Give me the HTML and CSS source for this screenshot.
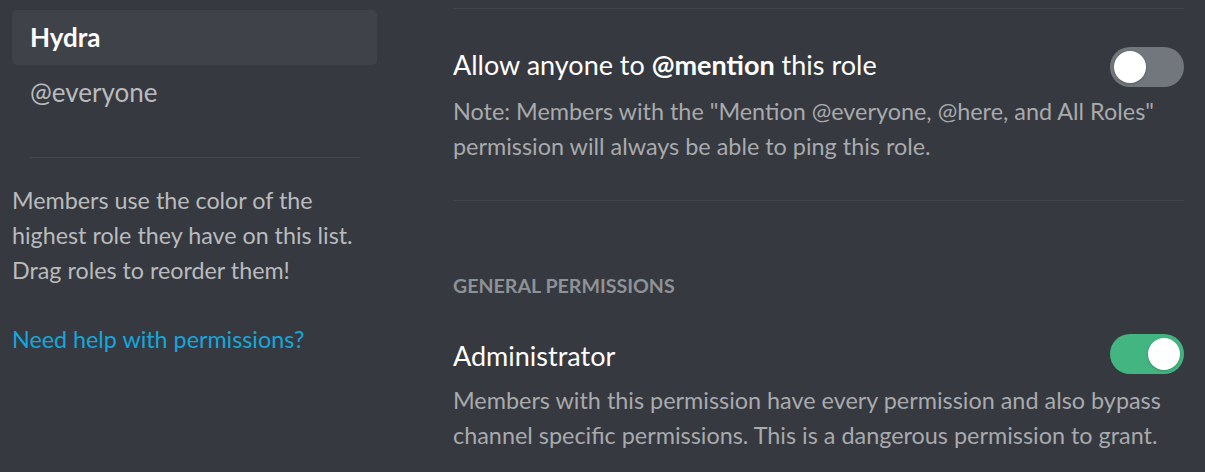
FILE: index.html
```html
<!DOCTYPE html>
<html lang="en">
<head>
<meta charset="utf-8">
<title>Roles</title>
<link rel="stylesheet" href="styles.css">
</head>
<body>
<div class="layout">
  <aside class="sidebar">
    <div class="roles">
      <div class="role role-selected">Hydra</div>
      <div class="role">@everyone</div>
    </div>
    <div class="sep"></div>
    <p class="hint">Members use the color of the highest role they have on this list. Drag roles to reorder them!</p>
    <a class="help" href="#">Need help with permissions?</a>
  </aside>
  <main class="content">
    <div class="divider"></div>
    <section class="setting setting-mention">
      <div class="setting-row">
        <h3 class="setting-title">Allow anyone to <strong>@mention</strong> this role</h3>
        <div class="toggle toggle-off"><span class="knob"></span></div>
      </div>
      <p class="desc">Note: Members with the "Mention @everyone, @here, and All Roles" permission will always be able to ping this role.</p>
    </section>
    <div class="divider divider-2"></div>
    <h4 class="section-title">General Permissions</h4>
    <section class="setting setting-admin">
      <div class="setting-row">
        <h3 class="setting-title">Administrator</h3>
        <div class="toggle toggle-on"><span class="knob"></span></div>
      </div>
      <p class="desc">Members with this permission have every permission and also bypass channel specific permissions. This is a dangerous permission to grant.</p>
    </section>
  </main>
</div>
</body>
</html>
```

FILE: styles.css
```css
html, body {
  margin: 0;
  padding: 0;
  background: #36393f;
  height: 100%;
  overflow: hidden;
}
body {
  font-family: Lato, "Open Sans", "Noto Sans", sans-serif;
  color: #dcddde;
}
.layout {
  display: flex;
  align-items: flex-start;
}
.sidebar {
  width: 365px;
  padding: 10px 0 0 12px;
  flex: none;
}
.roles {
  display: flex;
  flex-direction: column;
}
.role {
  height: 55px;
  line-height: 55px;
  padding-left: 18px;
  font-size: 26px;
  color: #b9bbbe;
  border-radius: 5px;
}
.role-selected {
  background: #3f4248;
  color: #ffffff;
  font-weight: 700;
}
.sep {
  height: 1px;
  background: #44474d;
  margin: 37px 17px 0 18px;
}
.hint {
  margin: 25px 0 0 0;
  width: 350px;
  font-size: 23.3px;
  line-height: 35px;
  color: #b9bbbe;
}
.help {
  display: block;
  margin-top: 34px;
  font-size: 23.3px;
  line-height: 35px;
  color: #14a7de;
  text-decoration: none;
}
.content {
  margin-left: 76px;
  width: 731px;
  padding-top: 8px;
}
.divider {
  height: 1px;
  background: #42454b;
}
.setting-row {
  display: flex;
  align-items: center;
  justify-content: space-between;
  height: 40px;
}
.setting-mention .setting-row {
  margin-top: 38px;
}
.setting-title {
  margin: 0;
  font-size: 27px;
  line-height: 40px;
  font-weight: 400;
  color: #ffffff;
}
.setting-mention .setting-title {
  padding-bottom: 4px;
}
.setting-title strong {
  font-weight: 700;
}
.desc {
  margin: 0;
  font-size: 23.4px;
  line-height: 35px;
  color: #a8aaad;
}
.setting-mention .desc {
  margin-top: 7px;
}
.divider-2 {
  margin-top: 36px;
}
.section-title {
  margin: 73px 0 0 0;
  font-size: 19.6px;
  line-height: 24px;
  font-weight: 700;
  text-transform: uppercase;
  color: #8e9297;
}
.setting-admin .setting-row {
  margin-top: 36px;
}
.setting-admin .setting-title {
  padding-top: 4px;
}
.setting-admin .desc {
  margin-top: 9px;
}
.toggle {
  width: 74px;
  height: 40px;
  border-radius: 20px;
  display: flex;
  align-items: center;
  padding: 0 4px;
  box-sizing: border-box;
  flex: none;
}
.toggle-off {
  background: #72767d;
  justify-content: flex-start;
}
.toggle-on {
  background: #43b581;
  justify-content: flex-end;
}
.knob {
  width: 32px;
  height: 32px;
  border-radius: 50%;
  background: #ffffff;
  box-shadow: 0 1px 3px rgba(0,0,0,0.2);
}
```
